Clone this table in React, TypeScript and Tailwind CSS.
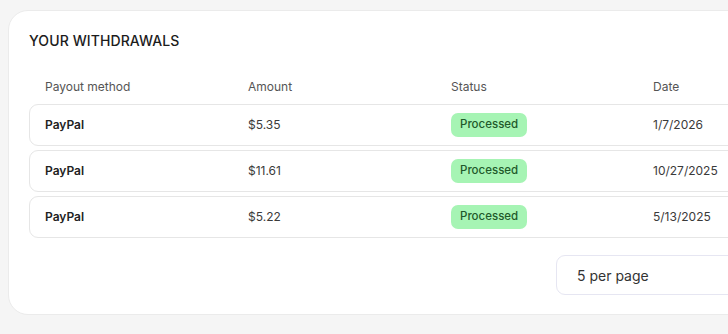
import React from "react";

type Withdrawal = {
  method: string;
  amount: string;
  status: string;
  date: string;
};

const withdrawals: Withdrawal[] = [
  { method: "PayPal", amount: "$5.35", status: "Processed", date: "1/7/2026" },
  { method: "PayPal", amount: "$11.61", status: "Processed", date: "10/27/2025" },
  { method: "PayPal", amount: "$5.22", status: "Processed", date: "5/13/2025" },
];

const columns = ["Payout method", "Amount", "Status", "Date"];

const StatusBadge: React.FC<{ label: string }> = ({ label }) => (
  <span className="inline-flex h-[24px] items-center rounded-[7px] bg-[#a6f4b4] px-[9px] text-[11.5px] font-medium text-[#1f5a2b]">
    {label}
  </span>
);

const App: React.FC = () => {
  return (
    <div
      className="h-[334px] w-[728px] overflow-hidden bg-[#f5f5f5] pl-[8px] pt-[10px]"
      style={{ fontFamily: "Inter, 'Noto Sans', sans-serif" }}
    >
      <div className="w-[900px] rounded-[20px] border border-[#ebebeb] bg-white px-[20px] pb-[19px] pt-[20px]">
        <h2 className="h-[20px] text-[14px] font-medium leading-[20px] tracking-[0.1px] text-[#1c1c1c]">
          YOUR WITHDRAWALS
        </h2>

        {/* column headings */}
        <div className="mt-[26px] grid h-[20px] grid-cols-[203px_203px_202px_203px_1fr] items-center px-[16px] text-[12px] text-[#555]">
          {columns.map((c) => (
            <span key={c}>{c}</span>
          ))}
        </div>

        <div className="mt-[7px] flex flex-col gap-[4px]">
          {withdrawals.map((w) => (
            <div
              key={w.date}
              className="grid h-[42px] grid-cols-[203px_203px_202px_203px_1fr] items-center rounded-[9px] border border-[#e6e6e6] px-[15px] text-[12px] text-[#3a3a3a]"
            >
              <span className="font-semibold text-[#222]">{w.method}</span>
              <span>{w.amount}</span>
              <span>
                <StatusBadge label={w.status} />
              </span>
              <span>{w.date}</span>
              <span />
            </div>
          ))}
        </div>

        {/* rows-per-page picker */}
        <div className="ml-[527px] mt-[17px] flex h-[40px] w-[220px] items-center rounded-[9px] border border-[#e6e6f2] px-[20px] text-[14px] text-[#333]">
          5 per page
        </div>
      </div>
    </div>
  );
};

export default App;
